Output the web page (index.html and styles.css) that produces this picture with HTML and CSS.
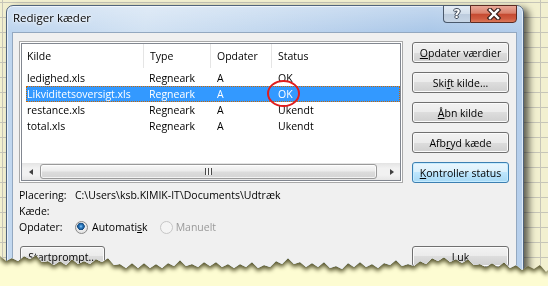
FILE: index.html
```html
<!DOCTYPE html>
<html lang="da">
<head>
    <meta charset="UTF-8">
    <meta name="viewport" content="width=device-width, initial-scale=1.0">
    <title>Rediger kæder</title>
    <link rel="stylesheet" href="styles.css">
</head>
<body>
    <div class="sheet">
        <div class="torn">
            <div class="window">
                <div class="titlebar">
                    <span class="title">Rediger kæder</span>
                    <div class="caption-buttons">
                        <span class="cap-btn help">?</span>
                        <span class="cap-btn close">
                            <svg width="16" height="12" viewBox="0 0 16 12">
                                <path d="M4 2 L12 10 M12 2 L4 10" stroke="#3a1f1a" stroke-width="4.6" stroke-linecap="square" fill="none"/>
                                <path d="M4 2 L12 10 M12 2 L4 10" stroke="#fff" stroke-width="2.4" stroke-linecap="square" fill="none"/>
                            </svg>
                        </span>
                    </div>
                </div>
                <div class="client">
                    <div class="top-row">
                        <div class="listbox">
                            <div class="list-inner">
                                <div class="list-head">
                                    <span>Kilde</span>
                                    <span>Type</span>
                                    <span>Opdater</span>
                                    <span>Status</span>
                                </div>
                                <div class="list-body">
                                    <div class="row">
                                        <span>ledighed.xls</span><span>Regneark</span><span>A</span><span>OK</span>
                                    </div>
                                    <div class="row selected">
                                        <span>Likviditetsoversigt.xls</span><span>Regneark</span><span>A</span><span>OK</span>
                                        <i class="ring"></i>
                                    </div>
                                    <div class="row">
                                        <span>restance.xls</span><span>Regneark</span><span>A</span><span>Ukendt</span>
                                    </div>
                                    <div class="row">
                                        <span>total.xls</span><span>Regneark</span><span>A</span><span>Ukendt</span>
                                    </div>
                                </div>
                                <div class="hscroll">
                                    <span class="arrow-btn"><i class="tri-left"></i></span>
                                    <span class="thumb"><i class="grip"></i></span>
                                    <span class="arrow-btn right"><i class="tri-right"></i></span>
                                </div>
                            </div>
                        </div>
                        <div class="side-buttons">
                            <button class="btn"><u>O</u>pdater værdier</button>
                            <button class="btn">Ski<u>f</u>t kilde...</button>
                            <button class="btn"><u>Å</u>bn kilde</button>
                            <button class="btn">Afb<u>r</u>yd kæde</button>
                            <button class="btn default"><u>K</u>ontroller status</button>
                        </div>
                    </div>
                    <div class="info">
                        <div class="info-row">
                            <span class="label">Placering:</span>
                            <span>C:\Users\ksb.KIMIK-IT\Documents\Udtræk</span>
                        </div>
                        <div class="info-row">
                            <span class="label">Kæde:</span>
                        </div>
                        <div class="info-row">
                            <span class="label">Opdater:</span>
                            <span class="radio checked"></span>
                            <span class="radio-text">Automati<u>s</u>k</span>
                            <span class="radio disabled"></span>
                            <span class="radio-text disabled">Manuelt</span>
                        </div>
                    </div>
                    <div class="bottom-row">
                        <button class="btn startprompt">S<u>t</u>artprompt...</button>
                        <button class="btn"><u>L</u>uk</button>
                    </div>
                </div>
            </div>
        </div>
    </div>
</body>
</html>
```

FILE: styles.css
```css
html, body {
    margin: 0;
    padding: 0;
    overflow: hidden;
}
body {
    width: 548px;
    height: 286px;
    background: #fdfcd2;
    font-family: "Open Sans", "Noto Sans", sans-serif;
    font-size: 10.5px;
    color: #000;
}
.sheet {
    width: 548px;
    height: 286px;
    filter: drop-shadow(0 3px 2px rgba(60, 58, 20, 0.85));
}
.torn {
    box-sizing: border-box;
    height: 286px;
    overflow: hidden;
    padding: 5px 0 0 6px;
    background-color: #f2f0d0;
    background-image:
        linear-gradient(#c6c5b8 1px, transparent 1px),
        linear-gradient(90deg, #c6c5b8 1px, transparent 1px);
    background-size: 100% 15px, 538px 100%;
    background-position: 0 2px, 2px 0;
    clip-path: polygon(0 0, 548px 0, 548px 270px, 546px 272px, 540px 265px, 534px 269px, 528px 266px, 522px 270px, 516px 265px, 510px 268px, 504px 262px, 498px 267px, 492px 263px, 486px 267px, 480px 264px, 474px 265px, 468px 259px, 462px 263px, 456px 259px, 450px 262px, 444px 257px, 438px 261px, 432px 258px, 426px 264px, 420px 261px, 414px 266px, 408px 264px, 402px 266px, 396px 260px, 390px 265px, 384px 263px, 378px 268px, 372px 264px, 366px 267px, 360px 262px, 354px 267px, 348px 263px, 342px 269px, 336px 266px, 330px 268px, 324px 262px, 318px 267px, 312px 263px, 306px 267px, 300px 262px, 294px 264px, 288px 258px, 282px 264px, 276px 261px, 270px 267px, 264px 265px, 258px 268px, 252px 262px, 246px 267px, 240px 264px, 234px 268px, 228px 264px, 222px 267px, 216px 262px, 210px 266px, 204px 262px, 198px 267px, 192px 264px, 186px 266px, 180px 260px, 174px 266px, 168px 263px, 162px 268px, 156px 264px, 150px 268px, 144px 263px, 138px 268px, 132px 263px, 126px 268px, 120px 264px, 114px 265px, 108px 258px, 102px 262px, 96px 259px, 90px 264px, 84px 261px, 78px 264px, 72px 259px, 66px 265px, 60px 261px, 54px 265px, 48px 261px, 42px 262px, 36px 255px, 30px 259px, 24px 256px, 18px 261px, 12px 258px, 6px 261px, 0 256px);
}
.window {
    box-sizing: border-box;
    width: 518px;
    height: 292px;
    padding: 0 6px 0 5px;
    border: 1px solid #50647c;
    border-radius: 7px 7px 0 0;
    background:
        linear-gradient(to bottom, rgba(255, 255, 255, 0.3), rgba(255, 255, 255, 0) 26px),
        linear-gradient(100deg, #bcd4ee 0%, #d2e2f3 25%, #c3d8ef 45%, #aac7e8 75%, #b8d0ec 100%);
    box-shadow: 5px 3px 7px rgba(0, 0, 0, 0.6), inset 0 0 0 1px rgba(255, 255, 255, 0.6);
}
.titlebar {
    display: flex;
    justify-content: space-between;
    height: 26px;
}
.title {
    padding: 4px 0 0 1px;
    line-height: 16px;
    font-size: 11.5px;
    text-shadow: 0 0 6px #fff, 0 0 3px #fff;
}
.caption-buttons {
    display: flex;
    height: 18px;
    margin-top: -1px;
}
.cap-btn {
    box-sizing: border-box;
    display: flex;
    justify-content: center;
    align-items: center;
    height: 18px;
    border: 1px solid #4a596c;
}
.cap-btn.help {
    width: 27px;
    border-right: none;
    border-radius: 0 0 0 4px;
    background: linear-gradient(to bottom, #e4ecf5 0%, #d3dfec 48%, #bccbdd 52%, #c8d6e6 100%);
    color: #fff;
    font-family: "DejaVu Sans", sans-serif;
    font-weight: bold;
    font-size: 12px;
    text-shadow: 1px 0 0 #3b4656, -1px 0 0 #3b4656, 0 1px 0 #3b4656, 0 -1px 0 #3b4656;
}
.cap-btn.close {
    width: 47px;
    border-color: #5b2b22;
    border-radius: 0 0 4px 0;
    background: linear-gradient(to bottom, #e9a999 0%, #d9806b 45%, #c54a31 52%, #cf5b40 80%, #dc7a5c 100%);
}
.client {
    box-sizing: border-box;
    width: 505px;
    height: 270px;
    padding: 8px 7px 0 6px;
    border: 1px solid #93a8c0;
    background: #f0f0f0;
}
.top-row {
    display: flex;
    gap: 9px;
    height: 142px;
}
.listbox {
    box-sizing: border-box;
    width: 384px;
    height: 142px;
    padding: 1px;
    border: 1px solid #a9a9a9;
    background: #fff;
}
.list-inner {
    box-sizing: border-box;
    height: 138px;
    border: 1px solid #828790;
    background: #fff;
    display: flex;
    flex-direction: column;
}
.list-head {
    display: grid;
    grid-template-columns: 122px 67px 61px 1fr;
    height: 24px;
    line-height: 24px;
}
.list-head span {
    padding-left: 6px;
    border-right: 1px solid #e5e5e5;
}
.list-head span:first-child {
    padding-left: 5px;
}
.list-head span:last-child {
    border-right: none;
}
.list-body {
    height: 93px;
    padding: 2px 0 0 4px;
}
.row {
    position: relative;
    display: grid;
    grid-template-columns: 117px 67px 61px 1fr;
    height: 16px;
    line-height: 16px;
}
.row span {
    padding-left: 7px;
    white-space: nowrap;
}
.row span:first-child {
    padding-left: 1px;
}
.row span:nth-child(2) {
    padding-left: 6px;
}
.row.selected {
    background: #3399ff;
    color: #fff;
    outline: 1px dotted #cc6600;
    outline-offset: -1px;
}
.ring {
    position: absolute;
    left: 241px;
    top: -6px;
    width: 33px;
    height: 27px;
    box-sizing: border-box;
    border: 2px solid #e01e1e;
    border-radius: 50%;
    z-index: 2;
}
.hscroll {
    display: flex;
    height: 17px;
    background: linear-gradient(to bottom, #e3e3e3, #f1f1f1 30%, #f1f1f1 70%, #e6e6e6);
}
.arrow-btn {
    display: flex;
    justify-content: center;
    align-items: center;
    width: 17px;
}
.arrow-btn.right {
    margin-left: 6px;
}
.tri-left {
    border-top: 3.5px solid transparent;
    border-bottom: 3.5px solid transparent;
    border-right: 4px solid #404040;
}
.tri-right {
    border-top: 3.5px solid transparent;
    border-bottom: 3.5px solid transparent;
    border-left: 4px solid #404040;
}
.thumb {
    box-sizing: border-box;
    display: flex;
    justify-content: center;
    align-items: center;
    width: 337px;
    height: 15px;
    margin: 1px 0 0 1px;
    border: 1px solid #9a9a9a;
    border-radius: 3px;
    background: linear-gradient(to bottom, #f8f8f8 0%, #ececec 45%, #dcdcdc 55%, #d4d4d4 100%);
    box-shadow: inset 0 0 0 1px rgba(255, 255, 255, 0.7);
}
.grip {
    width: 7px;
    height: 7px;
    background: repeating-linear-gradient(90deg, #4a4a4a 0 1px, #f4f4f4 1px 3px);
}
.side-buttons {
    display: flex;
    flex-direction: column;
    gap: 9px;
    width: 97px;
    padding-top: 1px;
}
.btn {
    box-sizing: border-box;
    width: 97px;
    height: 21px;
    padding: 0;
    border: 1px solid #707070;
    border-radius: 3px;
    background: linear-gradient(to bottom, #f2f2f2 0%, #ebebeb 50%, #dddddd 50%, #cfcfcf 100%);
    box-shadow: inset 0 0 0 1px #fbfbfb;
    font-family: inherit;
    font-size: 10.5px;
    color: #000;
    line-height: 18px;
}
.btn u {
    text-underline-offset: 1px;
}
.btn.default {
    border-color: #3c7fb1;
    background: linear-gradient(to bottom, #eaf6fd 0%, #d9f0fc 50%, #bee6fd 50%, #a7d9f5 100%);
    box-shadow: inset 0 0 0 1px #c6ecff;
}
.info {
    margin-top: 4px;
}
.info-row {
    display: flex;
    align-items: center;
    height: 16px;
    line-height: 16px;
}
.label {
    width: 56px;
}
.radio {
    box-sizing: border-box;
    width: 13px;
    height: 13px;
    border: 1px solid #8a8a8a;
    border-radius: 50%;
    background: radial-gradient(circle at 50% 40%, #ffffff, #dcdcdc);
}
.radio.checked {
    background:
        radial-gradient(circle at 45% 40%, #8fd0ff 0, #2f7fc6 1.5px, #15497e 3.5px, transparent 4px),
        radial-gradient(circle at 50% 40%, #ffffff, #d8d8d8);
}
.radio.disabled {
    border-color: #c6c6c6;
    background: #f4f4f4;
    margin-left: 12px;
}
.radio-text {
    margin-left: 4px;
}
.radio-text.disabled {
    color: #9a9a9a;
    margin-left: 3px;
}
.bottom-row {
    display: flex;
    justify-content: space-between;
    margin-top: 11px;
}
.btn.startprompt {
    width: 85px;
    margin-left: 1px;
}
```
